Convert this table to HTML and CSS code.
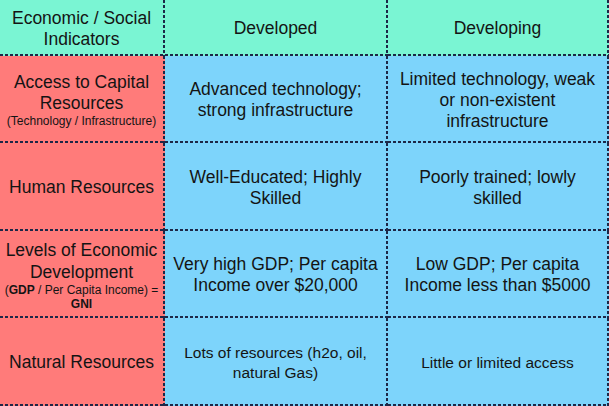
FILE: index.html
```html
<!DOCTYPE html>
<html lang="en">
<head>
<meta charset="utf-8">
<title>Economic / Social Indicators</title>
<link rel="stylesheet" href="styles.css">
</head>
<body>
<div class="table">
  <div class="cell head"><p>Economic / Social<br>Indicators</p></div>
  <div class="cell head"><p>Developed</p></div>
  <div class="cell head"><p>Developing</p></div>

  <div class="cell label">
    <p>Access to Capital<br>Resources</p>
    <p class="small">(Technology / Infrastructure)</p>
  </div>
  <div class="cell data"><p>Advanced technology;<br>strong infrastructure</p></div>
  <div class="cell data"><p>Limited technology, weak<br>or non-existent<br>infrastructure</p></div>

  <div class="cell label"><p>Human Resources</p></div>
  <div class="cell data"><p>Well-Educated; Highly<br>Skilled</p></div>
  <div class="cell data"><p>Poorly trained; lowly<br>skilled</p></div>

  <div class="cell label">
    <p class="tall">Levels of Economic<br>Development</p>
    <p class="small gdp">(<b>GDP</b> / Per Capita Income) =<br><b>GNI</b></p>
  </div>
  <div class="cell data"><p>Very high GDP; Per capita<br>Income over $20,000</p></div>
  <div class="cell data"><p>Low GDP; Per capita<br>Income less than $5000</p></div>

  <div class="cell label"><p>Natural Resources</p></div>
  <div class="cell data"><p class="mid">Lots of resources (h2o, oil,<br>natural Gas)</p></div>
  <div class="cell data"><p class="mid">Little or limited access</p></div>
</div>
</body>
</html>
```

FILE: styles.css
```css
:root {
  --line: #1d2747;
  --green: #7af5d3;
  --red: #ff7b7a;
  --blue: #7dd4fb;
}

* { box-sizing: border-box; }

html, body {
  margin: 0;
  padding: 0;
  background: #ffffff;
}

body {
  font-family: "Liberation Sans", Arial, Helvetica, sans-serif;
  color: #141414;
  width: 609px;
  height: 406px;
  overflow: hidden;
}

.table {
  display: grid;
  grid-template-columns: 165px 223px 221px;
  grid-template-rows: 56px 87px 88px 87px 88px;
  width: 609px;
}

.cell {
  display: flex;
  flex-direction: column;
  align-items: center;
  justify-content: center;
  text-align: center;
  padding: 1px 4px 0 2px;
  font-size: 17.5px;
  line-height: 21px;
  background-image:
    repeating-linear-gradient(90deg, var(--line) 0 3px, transparent 3px 5px),
    repeating-linear-gradient(180deg, var(--line) 0 3px, transparent 3px 5px);
  background-size: 100% 2px, 2px 100%;
  background-position: left bottom, right top;
  background-repeat: no-repeat;
}

.cell p {
  margin: 0;
}

.head { background-color: var(--green); }
.label { background-color: var(--red); }
.data { background-color: var(--blue); }

.tall {
  line-height: 22px;
}

.small {
  font-size: 12px;
  line-height: 15px;
  margin-top: 2px;
  white-space: nowrap;
}

.gdp {
  line-height: 14.5px;
}

.mid {
  font-size: 15.5px;
  line-height: 20px;
}
```
